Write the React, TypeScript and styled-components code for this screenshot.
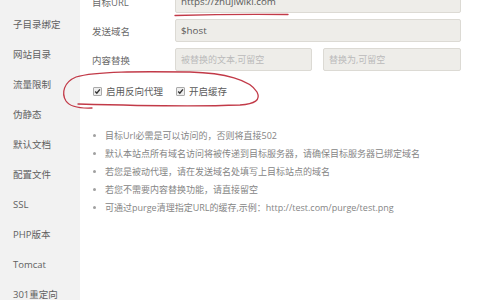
import React from 'react';
import styled, { createGlobalStyle } from 'styled-components';

const GlobalStyle = createGlobalStyle`
  html, body {
    margin: 0;
    padding: 0;
    background: #fff;
    font-family: "Open Sans", "Noto Sans CJK SC", sans-serif;
  }
`;

const Page = styled.div`
  position: relative;
  display: flex;
  width: 480px;
  height: 300px;
  overflow: hidden;
  background: #fff;
`;

const SideBar = styled.div`
  width: 80px;
  flex-shrink: 0;
  padding-top: 10px;
  background: #f2f2f2;
`;

const SideItem = styled.div`
  height: 30px;
  line-height: 30px;
  padding-left: 13px;
  font-size: 9.5px;
  color: #606060;
  white-space: nowrap;
`;

const MainContent = styled.div`
  flex: 1;
  margin-top: -10px;
  padding-left: 12px;
`;

const FormRow = styled.div`
  display: flex;
  align-items: center;
  height: 23px;
  margin-bottom: 6px;
`;

const Label = styled.div`
  width: 83px;
  flex-shrink: 0;
  font-size: 9.5px;
  color: #6a6a6a;
`;

const Inputs = styled.div`
  display: flex;
  gap: 11px;
`;

const Input = styled.div<{ $width: number; $placeholder?: boolean }>`
  box-sizing: border-box;
  width: ${(p) => p.$width}px;
  height: 23px;
  line-height: 21px;
  padding: 0 5px;
  border: 1px solid #dcdad4;
  border-radius: 2px;
  background: #eeede9;
  font-size: ${(p) => (p.$placeholder ? 9 : 9.8)}px;
  color: ${(p) => (p.$placeholder ? '#bababa' : '#5a5a5a')};
  white-space: nowrap;
  overflow: hidden;
`;

const CheckRow = styled.div`
  display: flex;
  align-items: center;
  gap: 13px;
  height: 14px;
  margin-top: 13px;
  padding-left: 1px;
`;

const CheckItem = styled.label`
  display: flex;
  align-items: center;
  gap: 4px;
  font-size: 9.5px;
  color: #5a5a5a;
`;

const Box = styled.span`
  position: relative;
  box-sizing: border-box;
  width: 9px;
  height: 9px;
  border: 1px solid #aaa;
  border-radius: 1px;
  background: #eee;
`;

const Tips = styled.ul`
  list-style: none;
  margin: 28px 0 0;
  padding: 0;
`;

const Tip = styled.li`
  display: flex;
  align-items: center;
  height: 18px;
  font-size: 9px;
  color: #858585;
  white-space: nowrap;

  &::before {
    content: '';
    width: 3px;
    height: 3px;
    margin: 0 9px 0 1px;
    border-radius: 50%;
    background: #a0a0a0;
  }
`;

const Marks = styled.svg`
  position: absolute;
  left: 0;
  top: 0;
  pointer-events: none;
`;

const Check = () => (
  <Box>
    <svg width="7" height="7" viewBox="0 0 7 7" style={{ position: 'absolute', left: 0, top: 0 }}>
      <path d="M1.2 3.6 L2.8 5.2 L5.9 1.4" fill="none" stroke="#333" strokeWidth="1.4" />
    </svg>
  </Box>
);

const sideItems = ['子目录绑定', '网站目录', '流量限制', '伪静态', '默认文档', '配置文件', 'SSL', 'PHP版本', 'Tomcat', '301重定向'];

const tips = [
  '目标Url必需是可以访问的，否则将直接502',
  '默认本站点所有域名访问将被传递到目标服务器，请确保目标服务器已绑定域名',
  '若您是被动代理，请在发送域名处填写上目标站点的域名',
  '若您不需要内容替换功能，请直接留空',
  '可通过purge清理指定URL的缓存,示例：http://test.com/purge/test.png'
];

export default function App() {
  return (
    <>
      <GlobalStyle />
      <Page>
        <SideBar>
          {sideItems.map((item) => <SideItem key={item}>{item}</SideItem>)}
        </SideBar>
        <MainContent>
          <FormRow>
            <Label>目标URL</Label>
            <Input $width={286}>https://zhujiwiki.com</Input>
          </FormRow>
          <FormRow>
            <Label>发送域名</Label>
            <Input $width={286}>$host</Input>
          </FormRow>
          <FormRow>
            <Label>内容替换</Label>
            <Inputs>
              <Input $width={137} $placeholder>被替换的文本,可留空</Input>
              <Input $width={138} $placeholder>替换为,可留空</Input>
            </Inputs>
          </FormRow>
          <CheckRow>
            <CheckItem><Check />启用反向代理</CheckItem>
            <CheckItem><Check />开启缓存</CheckItem>
          </CheckRow>
          <Tips>
            {tips.map((tip) => <Tip key={tip}>{tip}</Tip>)}
          </Tips>
        </MainContent>
        {/* red hand-drawn annotations */}
        <Marks width="480" height="300" viewBox="0 0 480 300">
          <path d="M175 15.5 C 210 14.5, 250 14, 288 14.5" fill="none" stroke="#c23a48" strokeWidth="1.3" strokeLinecap="round" />
          <path
            d="M92 108 C 80 108.5, 70 107, 66 101 C 61 93, 64 82, 76 77 C 96 71, 140 71.5, 190 72 C 225 73, 250 80, 257 92 C 261 100, 255 104, 240 105 C 200 106.5, 130 105.5, 78 104"
            fill="none"
            stroke="#c23a48"
            strokeWidth="1.3"
            strokeLinecap="round"
          />
        </Marks>
      </Page>
    </>
  );
}
